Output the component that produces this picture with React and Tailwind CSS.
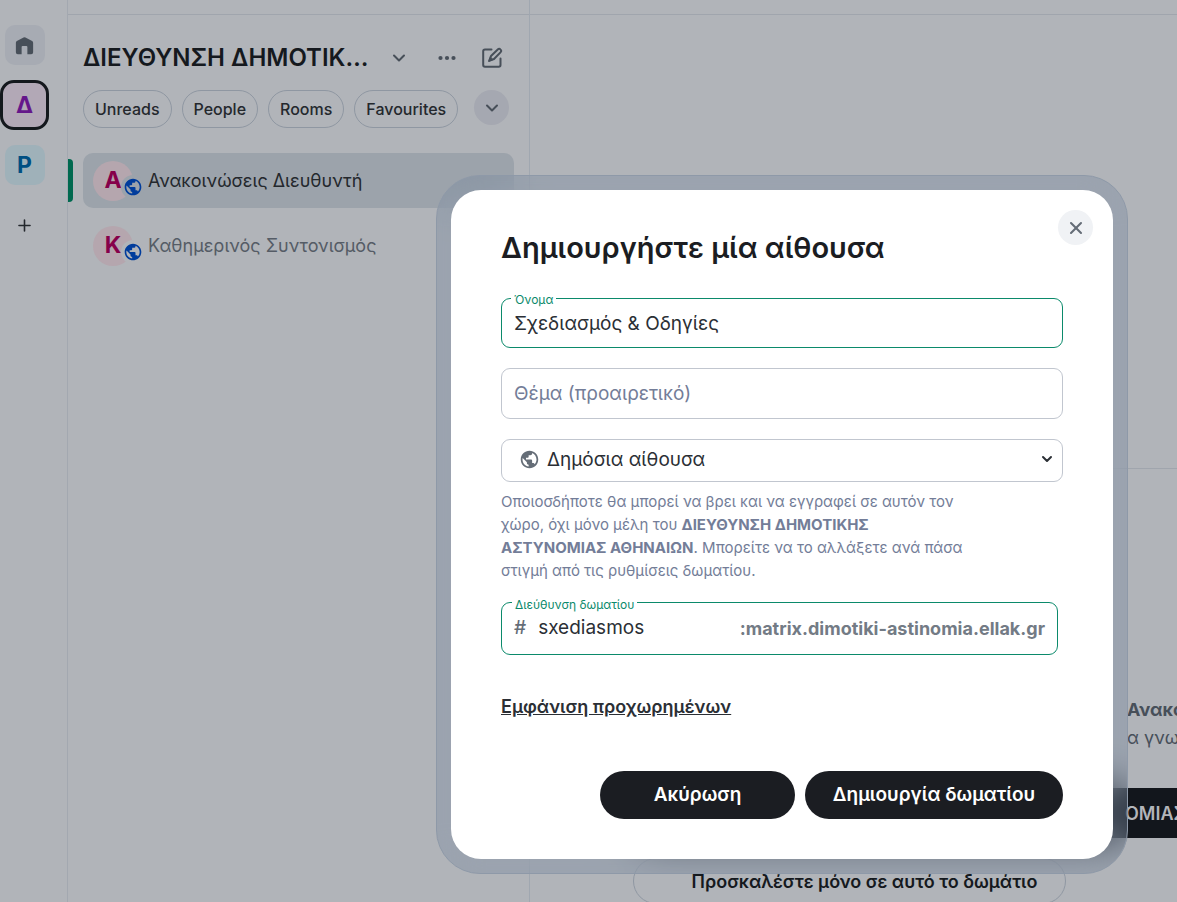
import React, { useState } from 'react';
import { MdPublic } from 'react-icons/md';
import { ChevronDown, Plus, X } from 'lucide-react';

const spaceName = 'ΔΙΕΥΘΥΝΣΗ ΔΗΜΟΤΙΚΗΣ ΑΣΤΥΝΟΜΙΑΣ ΑΘΗΝΑΙΩΝ';
const filters = ['Unreads', 'People', 'Rooms', 'Favourites'];
const rooms = [
  { id: 1, initial: 'Α', name: 'Ανακοινώσεις Διευθυντή', active: true },
  { id: 2, initial: 'Κ', name: 'Καθημερινός Συντονισμός', active: false },
];

const HomeIcon = () => (
  <svg viewBox="0 0 24 24" className="w-[23px] h-[23px]" fill="currentColor" aria-hidden="true">
    <path d="m12.971 3.54 7 3.889A2 2 0 0 1 21 9.177V19a2 2 0 0 1-2 2h-4v-7.5a1 1 0 0 0-1-1h-4a1 1 0 0 0-1 1V21H5a2 2 0 0 1-2-2V9.177a2 2 0 0 1 1.029-1.748l7-3.89a2 2 0 0 1 1.942 0Z" />
  </svg>
);

const DotsIcon = () => (
  <svg viewBox="0 0 24 24" className="w-6 h-6" fill="currentColor" aria-hidden="true">
    <circle cx="5.5" cy="12" r="2.1" />
    <circle cx="12" cy="12" r="2.1" />
    <circle cx="18.5" cy="12" r="2.1" />
  </svg>
);

const ComposeIcon = () => (
  <svg viewBox="0 0 24 24" className="w-6 h-6" fill="none" stroke="currentColor" strokeWidth="2" strokeLinejoin="round" aria-hidden="true">
    <path d="M11.5 3.5H5A1.8 1.8 0 0 0 3.2 5.3V19A1.8 1.8 0 0 0 5 20.8H18.7A1.8 1.8 0 0 0 20.5 19V12.5" strokeLinecap="round" />
    <path d="M9.2 14.9 11 10 18 3.3A1.6 1.6 0 0 1 20.3 3.4L20.8 3.9A1.6 1.6 0 0 1 20.7 6.1L14 13Z" />
    <path d="M8.5 15.5 10.3 10.8 13.2 13.7Z" fill="currentColor" strokeWidth="0.5" />
  </svg>
);

const SpaceRail = () => (
  <nav className="w-17 shrink-0 border-r border-[#a3a8b0] pt-5" aria-label="Spaces">
    <div className="w-[49px] flex flex-col gap-2.5">
      <div className="h-[50px] flex items-center justify-center">
        <button aria-label="Home" className="w-10 h-10 rounded-[10px] bg-[#a7abb3] text-[#474f59] flex items-center justify-center">
          <HomeIcon />
        </button>
      </div>
      <button className="h-[50px] rounded-[14px] border-3 border-[#14181d] bg-[#b2a8b6] text-[#65168a] text-[23px] font-bold">Δ</button>
      <div className="h-[50px] flex items-center justify-center">
        <button className="w-10 h-10 rounded-[10px] bg-[#9fb1b9] text-[#004f82] text-[23px] font-bold">P</button>
      </div>
      <button aria-label="Add" className="h-[50px] flex items-center justify-center text-[#24282d]">
        <Plus size={19} strokeWidth={2} />
      </button>
    </div>
  </nav>
);

const RoomItem = ({ room }) => (
  <li className="relative px-[15px]">
    {room.active && <span className="absolute left-0 top-1.5 bottom-1.5 w-[5px] rounded-r-[4px] bg-[#00694f]" />}
    <button className={room.active ? 'w-full h-[55px] px-2.5 flex items-center rounded-[10px] bg-[#9ca3ab] text-[#24282d]' : 'w-full h-[55px] px-2.5 flex items-center text-[#555c66]'}>
      <span className="relative w-10 h-10 shrink-0 rounded-full bg-[#b5a6ae] text-[#86004a] text-[23px] font-bold flex items-center justify-center">
        {room.initial}
        <span className={room.active ? 'absolute -right-3 bottom-0.5 p-0.5 rounded-full bg-[#9ca3ab] text-[#003c9c]' : 'absolute -right-3 bottom-0.5 p-0.5 rounded-full bg-[#b1b4b9] text-[#003c9c]'}>
          <MdPublic size={20} />
        </span>
      </span>
      <span className="ml-[15px] text-[18px] truncate">{room.name}</span>
    </button>
  </li>
);

const RoomList = () => (
  <section className="w-[462px] shrink-0 border-r border-[#a0a7b0]">
    <div className="h-[15px] border-b border-[#a0a5ad]" />
    <div className="pl-[15px] pr-[25px] pt-[25px] flex items-center h-[61px]">
      <h1 className="w-[294px] truncate text-[24px] font-semibold text-[#15191e]">{spaceName}</h1>
      <button aria-label="Space menu" className="ml-3 text-[#474f59]"><ChevronDown size={20} strokeWidth={2.4} /></button>
      <button aria-label="More options" className="ml-auto text-[#474f59]"><DotsIcon /></button>
      <button aria-label="New conversation" className="ml-[21px] text-[#474f59]"><ComposeIcon /></button>
    </div>
    <div className="mt-3.5 pl-[15px] pr-5 flex items-start gap-2.5">
      {filters.map((f) => (
        <button key={f} className="h-[38px] px-[11px] rounded-full border border-[#8f97a2] text-[16px] font-medium text-[#24282d]">{f}</button>
      ))}
      <button aria-label="Show more filters" className="ml-auto w-[35px] h-[35px] shrink-0 rounded-full bg-[#a5a8b1] text-[#474f59] flex items-center justify-center">
        <ChevronDown size={20} strokeWidth={2.4} />
      </button>
    </div>
    <ul className="mt-[25px] flex flex-col gap-2.5">
      {rooms.map((room) => <RoomItem key={room.id} room={room} />)}
    </ul>
  </section>
);

const Timeline = () => (
  <main className="flex-1 min-w-0 overflow-hidden whitespace-nowrap text-[18px]">
    <div className="h-[15px] border-b border-[#a0a5ad]" />
    <div className="h-[454px] border-b border-[#a0a5ad]" />
    <div className="mt-[227px] pl-[597px] leading-7 text-[#474f59]">
      <p className="font-bold">Ανακοινώσεις Διευθυντή</p>
      <p>α γνωρίζουν</p>
    </div>
    <div className="mt-9 ml-[103px] flex flex-col items-start gap-5">
      <button className="w-[700px] h-[50px] pl-[492px] rounded-full bg-[#12161c] text-[#b2b5ba] font-semibold text-left">ΟΜΙΑΣ ΑΘΗΝΑΙΩΝ</button>
      <button className="w-[433px] h-[46px] pl-[30px] rounded-full border border-[#8f97a2] text-[#15191e] font-semibold">Προσκαλέστε μόνο σε αυτό το δωμάτιο</button>
    </div>
  </main>
);

const CreateRoomDialog = () => {
  const [name, setName] = useState('Σχεδιασμός & Οδηγίες');
  const [topic, setTopic] = useState('');
  const [alias, setAlias] = useState('sxediasmos');

  return (
    <div className="fixed inset-0 flex items-start justify-end pt-[175px] pr-[49px]">
      <div className="w-full max-w-[692px] p-3.5 rounded-[44px] border border-[#8e99a8] bg-[#6b7f98]/30 backdrop-blur-[22px]">
        <form role="dialog" aria-labelledby="dialog-title" className="relative rounded-[30px] bg-white px-[50px] pt-10 pb-10 text-[19px] text-[#2b2f35]" onSubmit={(e) => e.preventDefault()}>
          <button type="button" aria-label="Close" className="absolute top-5 right-5 w-[35px] h-[35px] rounded-full bg-[#f0f2f5] text-[#656d77] flex items-center justify-center">
            <X size={20} strokeWidth={2.5} />
          </button>
          <h2 id="dialog-title" className="text-[29px] leading-9 font-semibold text-[#1b1d22]">Δημιουργήστε μία αίθουσα</h2>

          <div className="relative mt-8">
            <label htmlFor="room-name" className="absolute -top-1.5 left-2.5 px-[3px] bg-white text-[12px] leading-4 text-[#0b8a6b]">Όνομα</label>
            <input id="room-name" value={name} onChange={(e) => setName(e.target.value)} className="block w-full h-[50px] px-3 rounded-[9px] border border-[#0b8a6b] outline-none" />
          </div>

          <input aria-label="Θέμα (προαιρετικό)" placeholder="Θέμα (προαιρετικό)" value={topic} onChange={(e) => setTopic(e.target.value)} className="block mt-5 w-full h-[51px] px-3 rounded-[9px] border border-[#c1c6cf] outline-none placeholder:text-[#737d98]" />

          <div className="relative mt-5">
            <MdPublic size={21} className="absolute left-[18px] top-2.5 text-[#656d77]" />
            <select aria-label="Ορατότητα δωματίου" className="block w-full h-[43px] pl-[45px] rounded-[9px] border border-[#c1c6cf] bg-transparent appearance-none outline-none">
              <option>Δημόσια αίθουσα</option>
            </select>
            <ChevronDown size={16} strokeWidth={3} className="absolute right-2 top-3 pointer-events-none" />
          </div>

          <p className="mt-2 max-w-[470px] text-[15px] leading-[23px] text-[#737d98]">
            Οποιοσδήποτε θα μπορεί να βρει και να εγγραφεί σε αυτόν τον χώρο, όχι μόνο μέλη του <b className="font-bold">{spaceName}</b>. Μπορείτε να το αλλάξετε ανά πάσα στιγμή από τις ρυθμίσεις δωματίου.
          </p>

          <div className="relative mt-5 mr-[5px] h-[53px] px-3 flex items-center rounded-[9px] border border-[#0b8a6b]">
            <label htmlFor="room-alias" className="absolute -top-1.5 left-2.5 px-[3px] bg-white text-[12px] leading-4 text-[#0b8a6b]">Διεύθυνση δωματίου</label>
            <span className="font-medium text-[#656d77]">#</span>
            <input id="room-alias" value={alias} onChange={(e) => setAlias(e.target.value)} className="ml-3 flex-1 min-w-0 outline-none" />
            <span className="text-[18px] font-bold text-[#737b85]">:matrix.dimotiki-astinomia.ellak.gr</span>
          </div>

          <button type="button" className="block mt-10 text-[18px] leading-6 font-semibold underline">Εμφάνιση προχωρημένων</button>

          <div className="mt-[52px] flex justify-end gap-2.5 font-semibold text-white">
            <button type="button" className="w-[195px] h-12 rounded-full bg-[#1b1d22]">Ακύρωση</button>
            <button type="submit" className="w-[258px] h-12 rounded-full bg-[#1b1d22]">Δημιουργία δωματίου</button>
          </div>
        </form>
      </div>
    </div>
  );
};

const App = () => (
  <div className="h-screen flex overflow-hidden bg-[#b1b4b9] font-['Inter',sans-serif]">
    <SpaceRail />
    <RoomList />
    <Timeline />
    <CreateRoomDialog />
  </div>
);

export default App;
